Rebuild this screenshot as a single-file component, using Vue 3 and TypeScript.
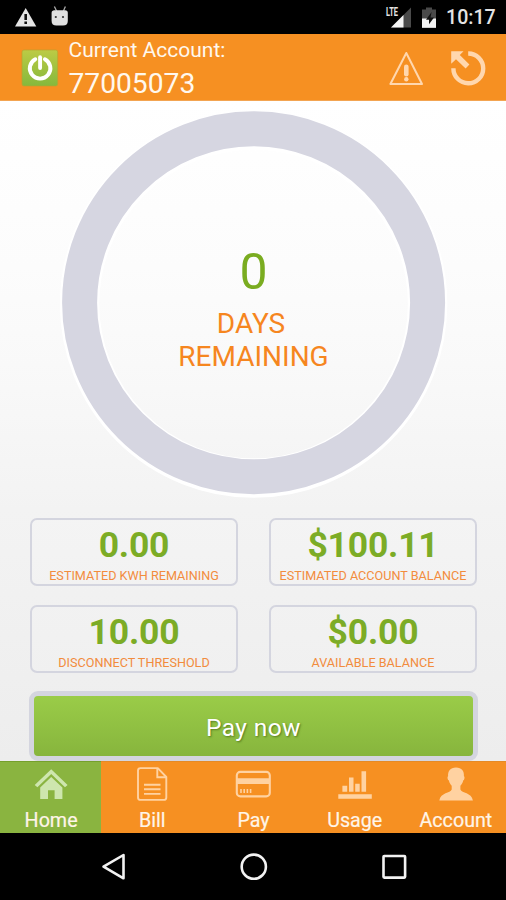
<script setup lang="ts">
interface Stat {
  value: string
  label: string
}
interface Tab {
  name: string
  active: boolean
}

const stats: Stat[] = [
  { value: '0.00', label: 'ESTIMATED KWH REMAINING' },
  { value: '$100.11', label: 'ESTIMATED ACCOUNT BALANCE' },
  { value: '10.00', label: 'DISCONNECT THRESHOLD' },
  { value: '$0.00', label: 'AVAILABLE BALANCE' },
]
const tabs: Tab[] = [
  { name: 'Home', active: true },
  { name: 'Bill', active: false },
  { name: 'Pay', active: false },
  { name: 'Usage', active: false },
  { name: 'Account', active: false },
]
</script>

<template>
  <div class="screen">
    <div class="status">
      <svg class="status-left" width="80" height="34" viewBox="0 0 80 34">
        <path d="M25.7 8 L36.3 26.6 H15 Z" fill="#e4e4e4" />
        <path d="M24.4 14 h2.6 v6 h-2.6z M24.4 21.6 h2.6 v2.5 h-2.6z" fill="#111" />
        <path d="M54.4 6.5 L56.6 11 M65.4 6.5 L63.4 11" stroke="#aaa" stroke-width="1.3" />
        <path d="M51.6 12.8 Q51.6 10.3 54.4 10.3 H65 Q67.8 10.3 67.8 12.8 V21 Q67.8 25.5 63 25.5 H56.4 Q51.6 25.5 51.6 21 Z" fill="#e0e0e0" />
        <circle cx="55.8" cy="17" r="1.1" fill="#333" />
        <circle cx="63" cy="17" r="1.1" fill="#333" />
      </svg>
      <div class="status-right">
        <span class="lte">LTE</span>
        <svg class="signal" width="56" height="34" viewBox="0 0 56 34">
          <path d="M25 7.5 V27.5 H5 Z" fill="#4a4a4a" />
          <path d="M17.5 15 V27.5 H5 Z" fill="#f4f4f4" />
          <path d="M40 7.5 h6 v2 h4 v18.3 h-14 v-18.3 h4z" fill="#4a4a4a" />
          <path d="M36 18.5 h14 v9.3 h-14z" fill="#f4f4f4" />
          <path d="M45.6 12 L40 19.7 h3 v4.6 L48 17.5 h-3.5z" fill="#111" />
        </svg>
        <span class="clock">10:17</span>
      </div>
    </div>

    <header class="header">
      <svg class="power" width="38" height="38" viewBox="0 0 38 38">
        <defs>
          <linearGradient id="power-fill" x1="0" y1="0" x2="0" y2="1">
            <stop offset="0" stop-color="#bccb45" />
            <stop offset="1" stop-color="#85b93c" />
          </linearGradient>
        </defs>
        <rect x="1" y="1" width="35.7" height="36" rx="2" fill="url(#power-fill)" stroke="#b9a52f" stroke-width=".7" />
        <path d="M14.3 10.2 A10.3 10.3 0 1 0 23.9 10.2" fill="none" stroke="#fff" stroke-width="3.9" stroke-linecap="round" />
        <path d="M19.1 8.2 V19" stroke="#fff" stroke-width="3.9" stroke-linecap="round" />
      </svg>
      <div class="account">
        <span class="account-label">Current Account:</span>
        <span class="account-number">77005073</span>
      </div>
      <svg class="alerts" width="102" height="40" viewBox="0 0 102 40">
        <path d="M18.3 3 L34 34 H2.4 Z" fill="none" stroke="#ffd7ae" stroke-width="2" stroke-linejoin="round" />
        <path d="M18.3 16.7 V24.2" stroke="#ffd7ae" stroke-width="4.6" stroke-linecap="round" />
        <circle cx="18.3" cy="29.3" r="2.2" fill="#ffd7ae" />
        <path d="M80.2 3.5 A14.9 14.9 0 1 1 65.4 18.2" fill="none" stroke="#ffd7ae" stroke-width="4.4" />
        <path d="M63.2 1.2 H75.5 L71.8 5.1 L81.4 14.6 L77.6 18.4 L68 9.2 L63.2 13.8 Z" fill="#ffd7ae" />
      </svg>
    </header>

    <main class="main">
      <section class="gauge">
        <svg class="ring" width="392" height="392" viewBox="0 0 392 392">
          <circle cx="196.6" cy="196" r="174" fill="none" stroke="#fff" stroke-width="39.5" />
          <circle cx="196.6" cy="194.8" r="174" fill="none" stroke="#d6d6e1" stroke-width="35" />
        </svg>
        <div class="gauge-text">
          <span class="days">0</span>
          <span class="caption caption-days">DAYS</span>
          <span class="caption">REMAINING</span>
        </div>
      </section>

      <section class="stats">
        <div v-for="s in stats" :key="s.label" class="stat">
          <span class="value">{{ s.value }}</span>
          <span class="label">{{ s.label }}</span>
        </div>
      </section>

      <button class="pay" type="button">Pay now</button>
    </main>

    <nav class="tabs">
      <div v-for="t in tabs" :key="t.name" class="tab" :class="{ active: t.active }">
        <svg class="tab-icon" width="40" height="36" viewBox="0 0 40 36">
          <g v-if="t.name === 'Home'" fill="#cee6ae">
            <path d="M20.2 2.2 L36.6 18 L34 20.2 L20.2 6.9 L6.4 20.2 L3.7 18 Z" />
            <path d="M20.2 9.9 L31.4 20.6 V31.9 H23.6 V23.2 H17 V31.9 H9.2 V20.6 Z" />
          </g>
          <g v-else-if="t.name === 'Bill'" fill="none" stroke="#ffd2a1" stroke-width="1.9">
            <path d="M25.8 1.1 H8.5 Q6 1.1 6 3.6 V30.4 Q6 32.9 8.5 32.9 H31.8 Q34.3 32.9 34.3 30.4 V10 Z" stroke-linejoin="round" />
            <path d="M25.3 1.5 V10.3 H34" />
            <path d="M12 17.7 H28.5 M12 22.3 H28.5 M12 26.9 H28.5" />
          </g>
          <g v-else-if="t.name === 'Pay'">
            <rect x="3.8" y="4.9" width="33" height="24.5" rx="3.5" fill="none" stroke="#ffd2a1" stroke-width="2.1" />
            <path d="M4 11.3 H37 V17 H4z" fill="#ffd2a1" />
            <path d="M8 22 v4 M11.2 22 v4 M14.4 22 v4 M17.6 22 v4" stroke="#ffd2a1" stroke-width="1.6" />
          </g>
          <g v-else-if="t.name === 'Usage'" fill="#ffd2a1">
            <path d="M7.4 18.8 h4.8 v6 h-4.8z M14 10.5 h4.5 v14.3 h-4.5z M20.2 16.8 h4.5 v8 h-4.5z M26.5 4.2 h4.6 v20.6 h-4.6z M3.3 27.2 h33.5 v4.6 h-33.5z" />
          </g>
          <path v-else fill="#ffd2a1" d="M20 .4 C25.8 .4 28.4 4.3 27.9 9 C29.1 10 28.5 12.7 27.2 13.6 C26.7 16 25.6 17.7 24.4 18.8 V22.5 C25.8 26.3 35.5 25.2 36.9 33.6 H3.3 C4.7 25.2 14.4 26.3 15.7 22.5 V18.8 C14.5 17.7 13.4 16 12.9 13.6 C11.5 12.7 11 10 12.1 9 C11.7 4.3 14.2 .4 20 .4 Z" />
        </svg>
        <span class="tab-name">{{ t.name }}</span>
      </div>
    </nav>

    <div class="system">
      <svg width="506" height="67" viewBox="0 0 506 67" fill="none" stroke="#f2f2f2" stroke-width="2.6">
        <path d="M123.5 22 V45.3 L103.5 33.7 Z" stroke-linejoin="round" />
        <circle cx="253.8" cy="33.7" r="12.1" />
        <rect x="383.5" y="23" width="21.6" height="21.6" rx=".8" />
      </svg>
    </div>
  </div>
</template>

<style>
body {
  margin: 0;
}
</style>

<style scoped>
.screen {
  width: 506px;
  height: 900px;
  display: flex;
  flex-direction: column;
  overflow: hidden;
  background: #000;
  font-family: Roboto, "Liberation Sans", sans-serif;
}
.screen * {
  box-sizing: border-box;
}
svg {
  display: block;
  flex: none;
}
.status {
  height: 34px;
  flex: none;
  display: flex;
  justify-content: space-between;
  color: #e4e4e4;
}
.status-right {
  display: flex;
  padding-right: 11px;
}
.lte {
  width: 14px;
  margin-right: -8px;
  padding-top: 6px;
  font-size: 12px;
  line-height: 13px;
  font-weight: 700;
  transform: translateX(6px) scaleX(.62);
  transform-origin: left;
}
.clock {
  width: 49px;
  margin-left: 4px;
  font-size: 19.6px;
  line-height: 36px;
  font-weight: 500;
  white-space: nowrap;
}
.header {
  height: 67px;
  flex: none;
  display: flex;
  padding-left: 21px;
  background: #f69022;
  border-bottom: 1px solid #f3a552;
  color: #fff8ee;
}
.power {
  margin-top: 15px;
}
.account {
  width: 330px;
  padding: 4px 0 0 9.5px;
  display: flex;
  flex-direction: column;
}
.account-label {
  font-size: 21px;
  line-height: 25px;
}
.account-number {
  font-size: 28.2px;
  line-height: 42px;
}
.alerts {
  margin: 16px 0 0 -1.5px;
}
.main {
  height: 660px;
  flex: none;
  display: flex;
  flex-direction: column;
  background: linear-gradient(#fff, #fcfcfc 25%, #f9f9f9 40%, #f3f3f3 62%, #ededed);
}
.gauge {
  height: 417px;
  display: grid;
  justify-items: center;
}
.ring {
  grid-area: 1 / 1;
  margin-top: 7px;
}
.gauge-text {
  grid-area: 1 / 1;
  padding: 141px 0 0 1px;
  display: flex;
  flex-direction: column;
  align-items: center;
  color: #f6861f;
}
.days {
  color: #7aac20;
  font-size: 50px;
  line-height: 60px;
}
.caption {
  font-size: 28px;
  line-height: 33px;
}
.caption-days {
  margin-top: 5px;
  margin-right: 5px;
}
.stats {
  display: grid;
  grid-template-columns: 208px 208px;
  grid-template-rows: 68px 68px;
  gap: 19px 31px;
  padding-left: 30px;
}
.stat {
  border: 2px solid #d4d5df;
  border-radius: 7px;
  display: flex;
  flex-direction: column;
  align-items: center;
  background: rgba(255, 255, 255, .1);
}
.value {
  height: 47px;
  font-size: 35.5px;
  line-height: 50px;
  font-weight: 700;
  letter-spacing: -.2px;
  color: #7cac26;
}
.label {
  font-size: 12.65px;
  line-height: 18px;
  color: #f28c3d;
  white-space: nowrap;
}
.pay {
  width: 449px;
  height: 70px;
  margin: 18px 0 0 29px;
  padding: 2px 0 0;
  border: 5px solid #d4d5df;
  border-radius: 9px;
  background: linear-gradient(#9acc48, #87b53d);
  font-family: inherit;
  font-size: 24.5px;
  letter-spacing: .4px;
  color: #fff;
  text-shadow: 1px 1px 2px rgba(50, 80, 10, .6);
}
.tabs {
  height: 72px;
  flex: none;
  display: grid;
  grid-template-columns: repeat(5, 1fr);
  background: #f69022;
  box-shadow: inset 0 1px #e58a25;
}
.tab {
  display: flex;
  flex-direction: column;
  align-items: center;
  padding: 6px 0 0 1px;
  color: #fff5e8;
}
.tab.active {
  background: #8ab440;
  box-shadow: inset 0 1px #75a02c;
}
.tab-name {
  font-size: 19.7px;
  line-height: 24px;
  margin-top: 6px;
  -webkit-text-stroke: .2px;
}
.system {
  height: 67px;
  flex: none;
}
</style>
